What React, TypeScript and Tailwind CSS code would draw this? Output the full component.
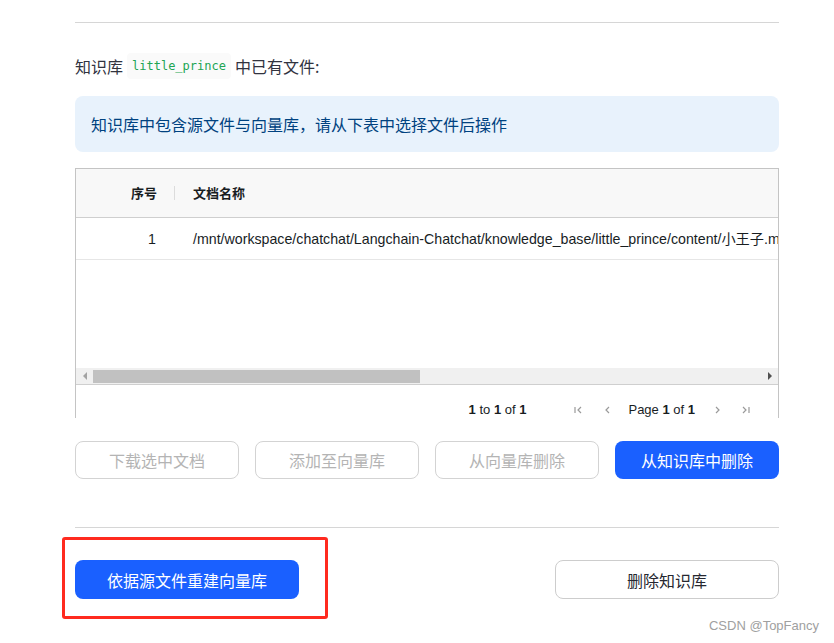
const cjk = "font-['Noto_Sans_CJK_SC','Noto_Sans',sans-serif]";
const grid = "font-['Liberation_Sans','Noto_Sans_CJK_SC',sans-serif]";

const PageIcon = ({ d }: { d: string }) => (
  <svg className="w-3 h-3" viewBox="0 0 12 12" fill="none" stroke="#9a9a9a" strokeWidth={1.2}>
    <path d={d} />
  </svg>
);

const FilesTable = () => (
  <div className={`h-[250px] overflow-hidden border-x border-t border-[#c4c4c4] ${grid}`}>
    <div className="flex h-[49px] items-center bg-[#f8f8f8] border-b border-[#cfcfcf] text-[13px] font-bold text-[#181d1f]">
      <div className={`w-[98px] pr-[17px] text-right ${cjk}`}>序号</div>
      <div className="h-[14px] w-px bg-[#dcdcdc]" />
      <div className={`pl-[18px] ${cjk}`}>文档名称</div>
    </div>
    <div className="flex h-[42px] items-center pt-[3px] border-b border-[#e6e6e6] text-[14.2px] text-[#181d1f] whitespace-nowrap overflow-hidden">
      <div className="w-[98px] shrink-0 pr-[18px] text-right">1</div>
      <div className="pl-[19px]">/mnt/workspace/chatchat/Langchain-Chatchat/knowledge_base/little_prince/content/小王子.md</div>
    </div>
    <div className="h-[108px]" />
    <div className="flex h-[17px] items-center bg-[#f0f0f0] border-b border-[#cfcfcf]">
      <div className="w-[17px] flex justify-center">
        <svg className="w-[6px] h-[8px]" viewBox="0 0 6 8"><path d="M5 0v8L1 4z" fill="#a3a3a3" /></svg>
      </div>
      <div className="h-[13px] w-[327px] bg-[#c1c1c1]" />
      <div className="flex-1" />
      <div className="w-[17px] flex justify-center">
        <svg className="w-[6px] h-[8px]" viewBox="0 0 6 8"><path d="M1 0v8l4-4z" fill="#505050" /></svg>
      </div>
    </div>
    <div className="flex h-[49px] items-center justify-end pr-[26px] text-[13px] text-[#181d1f]">
      <span>
        <b>1</b> to <b>1</b> of <b>1</b>
      </span>
      <div className="ml-[46px] flex items-center gap-[17px]">
        <PageIcon d="M3 3v6M9 3 6 6l3 3" />
        <PageIcon d="M8 3 5 6l3 3" />
      </div>
      <span className="ml-[15px]">
        Page <b>1</b> of <b>1</b>
      </span>
      <div className="ml-[17px] flex items-center gap-[16px]">
        <PageIcon d="m4 3 3 3-3 3" />
        <PageIcon d="m3 3 3 3-3 3M9 3v6" />
      </div>
    </div>
  </div>
);

const OutlineBtn = ({ label, disabled }: { label: string; disabled?: boolean }) => (
  <button
    className={`h-[38px] rounded-lg border bg-white text-[16px] ${
      disabled ? 'border-[#d3d3d3] text-[#b4b4b4]' : 'border-[#cdcdcd] text-[#262730]'
    }`}
  >
    {label}
  </button>
);

export default function App() {
  return (
    <div className={`relative h-[643px] w-[834px] bg-white ${cjk} text-[#31333f]`}>
      <div className="w-[704px] ml-[75px] pt-[22px]">
        <div className="h-px bg-[#d6d6d6]" />

        <div className="mt-[30px] flex items-center text-[16px] leading-6">
          <span>知识库</span>
          <code className="mx-[4px] rounded px-[5px] py-px bg-[#fafafa] text-[12px] text-[#21a553] font-['DejaVu_Sans_Mono',monospace]">
            little_prince
          </code>
          <span>中已有文件:</span>
        </div>

        <div className="mt-[17px] rounded-lg bg-[#e8f2fc] px-4 py-4 text-[16px] leading-6 text-[#004280]">
          知识库中包含源文件与向量库，请从下表中选择文件后操作
        </div>

        <div className="mt-[16px]">
          <FilesTable />
        </div>

        <div className="mt-[23px] grid grid-cols-4 gap-4">
          <OutlineBtn label="下载选中文档" disabled />
          <OutlineBtn label="添加至向量库" disabled />
          <OutlineBtn label="从向量库删除" disabled />
          <button className="h-[38px] rounded-lg bg-[#1a60ff] text-[16px] text-white">从知识库中删除</button>
        </div>

        <div className="mt-[48px] h-px bg-[#d6d6d6]" />

        <div className="mt-[32px] flex justify-between">
          <button className="h-[39px] w-[224px] rounded-lg bg-[#1a60ff] text-[16px] text-white">依据源文件重建向量库</button>
          <button className="h-[39px] w-[224px] rounded-lg border border-[#cdcdcd] bg-white text-[16px] text-[#262730]">
            删除知识库
          </button>
        </div>
      </div>

      <div className="absolute left-[62px] top-[537px] h-[82px] w-[266px] rounded-[3px] border-[3px] border-[#ff2a1f]" />
      <div className="absolute right-[15px] bottom-[8px] text-[13px] text-[#a0a0a0] font-['Liberation_Sans',sans-serif]">
        CSDN @TopFancy
      </div>
    </div>
  );
}
